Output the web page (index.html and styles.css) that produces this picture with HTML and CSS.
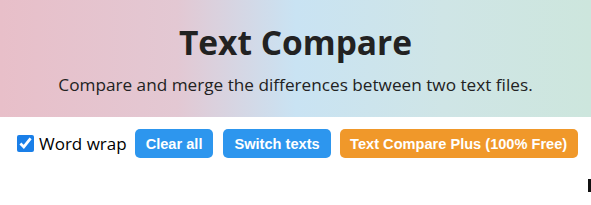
FILE: index.html
```html
<!DOCTYPE html>
<html lang="en">

<head>
    <meta charset="UTF-8">
    <meta name="viewport" content="width=device-width, initial-scale=1.0">
    <title>Text Compare</title>
    <link rel="stylesheet" href="styles.css">
</head>

<body>
    <div class="header">
        <h1>Text Compare</h1>
        <p>Compare and merge the differences between two text files.</p>
    </div>
    <div class="toolbar">
        <label class="wrap">
            <input type="checkbox" checked>
            Word wrap
        </label>
        <button class="btn">Clear all</button>
        <button class="btn">Switch texts</button>
        <button class="btn plus">Text Compare Plus (100% Free)</button>
    </div>
    <div class="panes">
        <div class="pane"></div>
        <div class="divider"></div>
    </div>
</body>

</html>
```

FILE: styles.css
```css
body {
    margin: 0;
    padding: 0;
    font-family: "Open Sans", "Noto Sans", sans-serif;
    color: #222;
    overflow: hidden;
}
.header {
    height: 117px;
    box-sizing: border-box;
    padding-top: 20px;
    text-align: center;
    background: linear-gradient(to right, #e8bfc9 0%, #e3c8d3 30%, #c9e3f3 50%, #cfe5e6 75%, #cde6dd 100%);
}
.header h1 {
    margin: 0;
    font-size: 33.5px;
    font-weight: 700;
    line-height: 44px;
    color: #222;
}
.header p {
    margin: 10px 0 0;
    font-size: 17.2px;
    line-height: 22px;
    color: #222;
}
.toolbar {
    display: flex;
    align-items: center;
    gap: 10px;
    padding: 12px 0 0 17px;
}
.wrap {
    display: flex;
    align-items: center;
    gap: 5px;
    font-size: 17px;
    color: #000;
    margin-right: -2px;
}
.wrap input {
    margin: 0;
    width: 17px;
    height: 17px;
    accent-color: #1a7fe8;
}
.btn {
    border: none;
    border-radius: 5px;
    background: #2d96ee;
    color: #fff;
    font-family: "Liberation Sans", Arial, sans-serif;
    font-weight: 700;
    font-size: 14.6px;
    height: 29px;
    padding: 0 11px;
}
.btn.plus {
    background: #f0982a;
    margin-left: -1px;
    padding: 0 10.5px;
}
.panes {
    display: flex;
    justify-content: flex-end;
    padding-top: 21px;
}
.divider {
    width: 3px;
    height: 13px;
    background: #111;
}
```
